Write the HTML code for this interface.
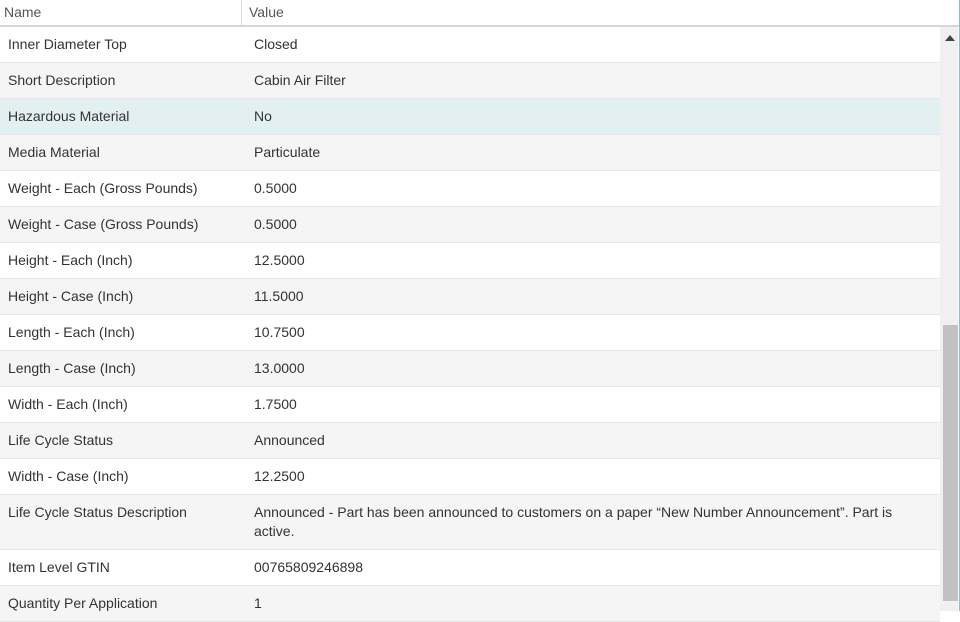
<!DOCTYPE html>
<html><head><style>
body{margin:0;width:960px;height:611px;overflow:hidden;background:#fff;font-family:"Liberation Sans",sans-serif;color:#333;font-size:14px;position:relative}
.hdr{position:absolute;left:0;top:0;width:960px;height:25px;border-bottom:2px solid #d6d6d6;background:#fff;color:#555}
.hdr span{position:absolute;top:4px}
.hdr .div{position:absolute;left:241px;top:0;width:1px;height:25px;background:#ddd}
.rows{position:absolute;left:0;top:27px;width:940px}
.r{position:relative;height:35px;border-bottom:1px solid #e6e6e6}
.r:nth-child(even){background:#f5f5f5}
.r.hl{background:#e3f0f2}
.r .n{position:absolute;left:8px;top:8px;line-height:19px}
.r .v{position:absolute;left:254px;top:8px;width:670px;line-height:19px}
.sb{position:absolute;left:940px;top:27px;width:18px;height:584px;background:#f0f0f0}
.th{position:absolute;left:943px;top:325px;width:15px;height:276px;background:#c1c1c1}
.edge{position:absolute;left:959px;top:0;width:1px;height:611px;background:#7cc3d4}
</style></head><body>
<div class="hdr"><span style="left:4px">Name</span><div class="div"></div><span style="left:249px">Value</span></div>
<div class="rows">
<div class="r"><span class="n">Inner Diameter Top</span><span class="v">Closed</span></div>
<div class="r"><span class="n">Short Description</span><span class="v">Cabin Air Filter</span></div>
<div class="r hl"><span class="n">Hazardous Material</span><span class="v">No</span></div>
<div class="r"><span class="n">Media Material</span><span class="v">Particulate</span></div>
<div class="r"><span class="n">Weight - Each (Gross Pounds)</span><span class="v">0.5000</span></div>
<div class="r"><span class="n">Weight - Case (Gross Pounds)</span><span class="v">0.5000</span></div>
<div class="r"><span class="n">Height - Each (Inch)</span><span class="v">12.5000</span></div>
<div class="r"><span class="n">Height - Case (Inch)</span><span class="v">11.5000</span></div>
<div class="r"><span class="n">Length - Each (Inch)</span><span class="v">10.7500</span></div>
<div class="r"><span class="n">Length - Case (Inch)</span><span class="v">13.0000</span></div>
<div class="r"><span class="n">Width - Each (Inch)</span><span class="v">1.7500</span></div>
<div class="r"><span class="n">Life Cycle Status</span><span class="v">Announced</span></div>
<div class="r"><span class="n">Width - Case (Inch)</span><span class="v">12.2500</span></div>
<div class="r" style="height:54px;background:#f5f5f5"><span class="n">Life Cycle Status Description</span><span class="v">Announced - Part has been announced to customers on a paper “New Number Announcement”. Part is active.</span></div>
<div class="r" style="background:#fff"><span class="n">Item Level GTIN</span><span class="v">00765809246898</span></div>
<div class="r" style="background:#f5f5f5"><span class="n">Quantity Per Application</span><span class="v">1</span></div>
</div>
<div class="sb"></div>
<div class="th"></div>
<svg style="position:absolute;left:944px;top:34px" width="12" height="8"><polygon points="1,7 6,1 11,7" fill="#444"/></svg>
<div class="edge"></div>
</body></html>
